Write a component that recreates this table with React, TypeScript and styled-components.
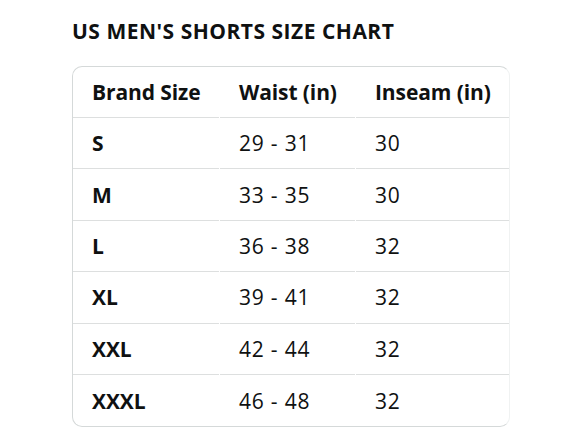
import React from "react";
import styled, { createGlobalStyle } from "styled-components";

const GlobalStyle = createGlobalStyle`
  body {
    margin: 0;
    background: #ffffff;
    font-family: "Open Sans", "Noto Sans", sans-serif;
    color: #0f1111;
  }
`;

const Page = styled.div`
  padding: 17px 0 0 72px;
`;

const Title = styled.h2`
  margin: 0 0 21px;
  font-size: 21px;
  font-weight: 700;
  line-height: 28px;
  letter-spacing: 0.5px;
`;

const Chart = styled.div`
  width: 438px;
  border: 1px solid #d5d9d9;
  border-right-color: #f0f2f2;
  border-radius: 10px;
  box-sizing: border-box;
  overflow: hidden;
`;

const Row = styled.div<{ $head?: boolean }>`
  display: grid;
  grid-template-columns: 146px 135px 1fr;
  column-gap: 1px;
  height: ${(p) => (p.$head ? "51px" : "51.4px")};
`;

const Cell = styled.div<{ $bold?: boolean; $last?: boolean }>`
  display: flex;
  align-items: center;
  padding-left: 19px;
  font-size: 21px;
  font-weight: ${(p) => (p.$bold ? 700 : 400)};
  letter-spacing: ${(p) => (p.$bold ? "-0.1px" : "0.8px")};
  border-bottom: ${(p) => (p.$last ? "none" : "1px solid #dddfdf")};
  white-space: nowrap;
`;

const sizes = [
  { size: "S", waist: "29 - 31", inseam: "30" },
  { size: "M", waist: "33 - 35", inseam: "30" },
  { size: "L", waist: "36 - 38", inseam: "32" },
  { size: "XL", waist: "39 - 41", inseam: "32" },
  { size: "XXL", waist: "42 - 44", inseam: "32" },
  { size: "XXXL", waist: "46 - 48", inseam: "32" },
];

export default function App() {
  return (
    <Page>
      <GlobalStyle />
      <Title>US MEN'S SHORTS SIZE CHART</Title>
      <Chart>
        <Row $head>
          <Cell $bold>Brand Size</Cell>
          <Cell $bold>Waist (in)</Cell>
          <Cell $bold>Inseam (in)</Cell>
        </Row>
        {sizes.map((s, i) => {
          const last = i === sizes.length - 1;
          return (
            <Row key={s.size}>
              <Cell $bold $last={last}>{s.size}</Cell>
              <Cell $last={last}>{s.waist}</Cell>
              <Cell $last={last}>{s.inseam}</Cell>
            </Row>
          );
        })}
      </Chart>
    </Page>
  );
}
